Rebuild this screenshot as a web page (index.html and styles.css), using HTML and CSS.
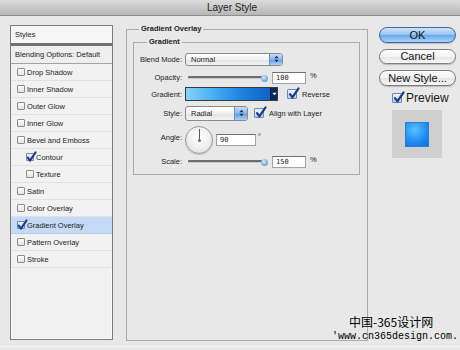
FILE: index.html
```html
<!DOCTYPE html>
<html>
<head>
<meta charset="utf-8">
<title>Layer Style</title>
<link rel="stylesheet" href="styles.css">
</head>
<body>
<div class="titlebar">Layer Style</div>
<div class="content">
  <div class="styles-panel">
    <div class="sp-head">Styles</div>
    <div class="sp-blend">Blending Options: Default</div>
    <ul class="sp-list">
      <li><span class="cb"></span>Drop Shadow</li>
      <li><span class="cb"></span>Inner Shadow</li>
      <li><span class="cb"></span>Outer Glow</li>
      <li><span class="cb"></span>Inner Glow</li>
      <li><span class="cb"></span>Bevel and Emboss</li>
      <li class="sub"><span class="cb on"><svg viewBox="0 0 10 10"><path d="M1.8 4.6 L4 7.6 L9.6 -0.6"/></svg></span>Contour</li>
      <li class="sub"><span class="cb"></span>Texture</li>
      <li><span class="cb"></span>Satin</li>
      <li><span class="cb"></span>Color Overlay</li>
      <li class="selected"><span class="cb on"><svg viewBox="0 0 10 10"><path d="M1.8 4.6 L4 7.6 L9.6 -0.6"/></svg></span>Gradient Overlay</li>
      <li><span class="cb"></span>Pattern Overlay</li>
      <li><span class="cb"></span>Stroke</li>
    </ul>
  </div>

  <fieldset class="outer">
    <legend>Gradient Overlay</legend>
    <fieldset class="inner">
      <legend>Gradient</legend>
      <div class="row r1">
        <span class="lbl">Blend Mode:</span>
        <div class="select wide"><span class="val">Normal</span><span class="step"><svg viewBox="0 0 6 9"><path d="M3 0.5 L5.5 3.5 L0.5 3.5 Z M3 8.5 L5.5 5.5 L0.5 5.5 Z"/></svg></span></div>
      </div>
      <div class="row r2">
        <span class="lbl">Opacity:</span>
        <div class="slider"><span class="track"></span></div>
        <span class="num">100</span><span class="unit">%</span>
      </div>
      <div class="row r3">
        <span class="lbl">Gradient:</span>
        <div class="gradbar"><span class="fill"></span><span class="drop"><svg viewBox="0 0 6 4"><path d="M0.5 0.5 L5.5 0.5 L3 3.5 Z"/></svg></span></div>
        <span class="cb big on gap-rev"><svg viewBox="0 0 10 10"><path d="M1.8 4.6 L4 7.6 L9.6 -0.6"/></svg></span>
        <span class="cblbl">Reverse</span>
      </div>
      <div class="row r4">
        <span class="lbl">Style:</span>
        <div class="select narrow"><span class="val">Radial</span><span class="step"><svg viewBox="0 0 6 9"><path d="M3 0.5 L5.5 3.5 L0.5 3.5 Z M3 8.5 L5.5 5.5 L0.5 5.5 Z"/></svg></span></div>
        <span class="cb big on gap-align"><svg viewBox="0 0 10 10"><path d="M1.8 4.6 L4 7.6 L9.6 -0.6"/></svg></span>
        <span class="cblbl">Align with Layer</span>
      </div>
      <div class="row r5">
        <span class="lbl lbl-angle">Angle:</span>
        <div class="dial"><span class="hand"></span><span class="dot"></span></div>
        <span class="num angle">90</span><span class="deg">°</span>
      </div>
      <div class="row r6">
        <span class="lbl">Scale:</span>
        <div class="slider"><span class="track"></span></div>
        <span class="num">150</span><span class="unit">%</span>
      </div>
    </fieldset>
  </fieldset>

  <div class="side">
    <div class="btn primary">OK</div>
    <div class="btn b-cancel">Cancel</div>
    <div class="btn b-new">New Style...</div>
    <div class="preview-row"><span class="cb big on"><svg viewBox="0 0 10 10"><path d="M1.8 4.6 L4 7.6 L9.6 -0.6"/></svg></span><span class="pv-lbl">Preview</span></div>
    <div class="preview-box"><span class="swatch"></span></div>
  </div>
</div>
<div class="bottom-edge"></div>

<div class="watermark">
  <div class="wm-cn">中国-365设计网</div>
  <div class="wm-url">'www.cn365design.com.</div>
</div>
</body>
</html>
```

FILE: styles.css
```css
* { box-sizing: border-box; margin: 0; padding: 0; }

html, body { width: 460px; height: 350px; overflow: hidden; }

body {
  position: relative;
  background: #e8e8e8;
  font-family: "Liberation Sans", Arial, sans-serif;
  font-size: 7.5px;
  color: #1c1c1c;
}

/* title bar */
.titlebar {
  height: 16px;
  background: linear-gradient(#dcdcdc, #b6b6b6);
  border-bottom: 1px solid #8e8e8e;
  text-align: center;
  font-size: 10px;
  line-height: 15px;
  color: #202020;
  padding-left: 4px;
}

.content {
  display: flex;
  align-items: flex-start;
  height: 330px;
  padding: 9px 0 0 10px;
}

.bottom-edge {
  height: 1px;
  background: #d2d2d2;
  border-top: 1px solid #f4f4f4;
}

/* left styles list */
.styles-panel {
  width: 103px;
  height: 315px;
  border: 1px solid #7c7c7c;
  background: #f1f1f1;
  box-shadow: inset 0 0 0 1px #fafafa;
}

.sp-head {
  height: 20px;
  line-height: 17px;
  padding-left: 4px;
  background: #f6f6f6;
  border-bottom: 3px solid #707070;
}

.sp-blend {
  height: 18px;
  line-height: 17px;
  padding-left: 4px;
  background: #efefef;
  border-bottom: 1px solid #a3a3a3;
}

.sp-list { list-style: none; }

.sp-list li {
  height: 17px;
  display: flex;
  align-items: center;
  padding-left: 6px;
  border-bottom: 1px solid #e1e1e1;
  background: #f2f2f2;
}

.sp-list li.sub { padding-left: 15px; }
.sp-list li.selected { background: #c4daf6; border-bottom-color: #b4cbe8; }

.sp-list .cb { margin-right: 2px; }

/* checkboxes */
.cb {
  position: relative;
  flex: none;
  width: 8px;
  height: 8px;
  margin-right: 1px;
  border: 1px solid #8c8c8c;
  border-radius: 1px;
  background: linear-gradient(#ffffff, #e2e2e2);
}

.cb svg {
  position: absolute;
  left: -1px;
  top: -1px;
  width: 10px;
  height: 10px;
  overflow: visible;
}

.cb svg path {
  fill: none;
  stroke: #1d3b86;
  stroke-width: 2;
  stroke-linecap: round;
  stroke-linejoin: round;
}

.cb.on { background: linear-gradient(#eef5fd, #b8d4f2); border-color: #6a86b3; }

.cb.big { width: 10px; height: 10px; }
.cb.big svg { width: 11px; height: 11px; left: 0; top: -1px; }

/* fieldsets */
fieldset { min-width: 0; }

.outer {
  margin-left: 13px;
  width: 242px;
  height: 316px;
  border: 1px solid #ababab;
  padding: 5px 7px 0 6px;
}

.outer > legend,
.inner > legend {
  font-weight: bold;
  line-height: 8px;
  padding: 0 2px;
  color: #222;
}

.outer > legend { margin-left: 6px; }

.inner {
  width: 227px;
  height: 137px;
  border: 1px solid #ababab;
  padding: 6px 0 5px 0;
}

.inner > legend { margin-left: 13px; }

.row {
  display: flex;
  align-items: center;
}

.r1 { height: 14px; }
.r2 { height: 13px; margin-top: 5px; }
.r3 { height: 14px; margin-top: 3px; }
.r4 { height: 16px; margin-top: 4px; }
.r5 { height: 28px; margin-top: 5px; }
.r6 { height: 13px; margin-top: 1px; }

.lbl {
  flex: none;
  width: 48px;
  margin-right: 3px;
  text-align: right;
  color: #222;
}

.lbl-angle { align-self: flex-start; margin-top: 7px; }

/* select */
.select {
  display: flex;
  align-items: center;
  height: 13px;
  border: 1px solid #8a8a8a;
  border-radius: 3px;
  background: linear-gradient(#ffffff, #f1f1f1 50%, #e2e2e2 51%, #f4f4f4);
  overflow: hidden;
}

.select.wide { width: 98px; }
.select.narrow { width: 63px; height: 15px; }

.select .val { padding-left: 5px; flex: 1; }

.select .step {
  width: 13px;
  height: 100%;
  display: flex;
  align-items: center;
  justify-content: center;
  border-left: 1px solid #6d8fbf;
  background: linear-gradient(#c3def9, #84b6ec 50%, #5d9ae2 51%, #a8d2f8);
}

.select .step svg { width: 5px; height: 8px; }
.select .step svg path { fill: #1f2f4a; }

/* slider */
.slider {
  position: relative;
  width: 80px;
  height: 8px;
  margin-left: 3px;
  display: flex;
  align-items: center;
}

.slider .track {
  width: 76px;
  height: 3px;
  background: #6d6d6d;
  border-bottom: 1px solid #c9c9c9;
  border-radius: 1px;
}

.slider::after {
  content: "";
  position: absolute;
  right: 0;
  top: 1px;
  width: 7px;
  height: 7px;
  border-radius: 50%;
  background: radial-gradient(circle at 40% 35%, #d6e8fb, #6e9fd9 70%, #4a7cbf);
}

.num {
  margin-left: 4px;
  width: 34px;
  height: 12px;
  line-height: 10px;
  padding-left: 3px;
  background: #fff;
  border: 1px solid #a3a3a3;
  border-top-color: #6f6f6f;
  font-family: "DejaVu Sans Mono", monospace;
  font-size: 7px;
}

.num.angle { margin-left: 3px; width: 40px; }

.unit { margin-left: 4px; align-self: flex-start; }
.deg { margin-left: 2px; align-self: flex-start; margin-top: 6px; }

/* gradient swatch */
.gradbar {
  display: flex;
  width: 93px;
  height: 14px;
  border: 1px solid #3a3a3a;
}

.gradbar .fill {
  flex: 1;
  background: linear-gradient(to right, #86d2fb 0%, #45abf1 35%, #1f84e0 65%, #0f62c8 100%);
}

.gradbar .drop {
  width: 7px;
  display: flex;
  align-items: center;
  justify-content: center;
  background: #0b2b5e;
  border-left: 1px solid #061a3a;
}

.gradbar .drop svg { width: 5px; height: 4px; }
.gradbar .drop svg path { fill: #ffffff; }

.gap-rev { margin-left: 9px; }
.gap-align { margin-left: 6px; }

.cblbl { margin-left: 4px; }

/* angle dial */
.dial {
  position: relative;
  width: 28px;
  height: 28px;
  border-radius: 50%;
  border: 1px solid #9a9a9a;
  background: radial-gradient(circle at 50% 40%, #ffffff 0%, #f0f0f0 50%, #d4d4d4 100%);
  box-shadow: 0 1px 1px rgba(0,0,0,0.15);
}

.dial .hand {
  position: absolute;
  left: 13px;
  top: 2px;
  width: 1px;
  height: 11px;
  background: #5a5a5a;
}

.dial .dot {
  position: absolute;
  left: 12px;
  top: 12px;
  width: 3px;
  height: 3px;
  border-radius: 50%;
  background: #6a6a6a;
}

/* right column */
.side {
  margin-left: 11px;
  width: 77px;
  display: flex;
  flex-direction: column;
}

.btn {
  height: 16px;
  border-radius: 8px;
  text-align: center;
  font-size: 11px;
  line-height: 14px;
  color: #111;
  border: 1px solid #7d7d7d;
  background: linear-gradient(#ffffff, #f4f4f4 50%, #e4e4e4 51%, #f8f8f8);
  box-shadow: 0 1px 1px rgba(0,0,0,0.2);
}

.btn.primary {
  margin-top: 2px;
  border-color: #3e67ad;
  background: linear-gradient(#cfe6fc, #95c4f2 48%, #67a6ea 52%, #a9d6fb);
}

.b-cancel { margin-top: 6px; height: 15px; line-height: 13px; }
.b-new { margin-top: 6px; }

.preview-row {
  display: flex;
  align-items: center;
  margin-top: 7px;
  padding-left: 13px;
  height: 10px;
}

.pv-lbl {
  margin-left: 3px;
  font-size: 12px;
  line-height: 10px;
  color: #1a1a1a;
}

.preview-box {
  margin-top: 7px;
  margin-left: 13px;
  width: 50px;
  height: 48px;
  background: #cfcfcf;
  display: flex;
  align-items: center;
  justify-content: center;
}

.preview-box .swatch {
  width: 24px;
  height: 25px;
  background: radial-gradient(circle at 40% 30%, #5cc0ff, #1d8bf0 60%, #0d6fe0);
  border: 1px solid #2a7bd2;
}

/* watermark overlay */
.watermark {
  position: absolute;
  left: 0;
  top: 0;
}

.wm-cn {
  position: absolute;
  left: 349px;
  top: 315px;
  white-space: nowrap;
  font-family: "Noto Sans CJK SC", sans-serif;
  font-size: 12px;
  line-height: 14px;
  color: #000;
}

.wm-url {
  position: absolute;
  left: 332px;
  top: 331px;
  white-space: nowrap;
  font-family: "Liberation Mono", monospace;
  font-size: 10px;
  line-height: 12px;
  color: #000;
}
```
